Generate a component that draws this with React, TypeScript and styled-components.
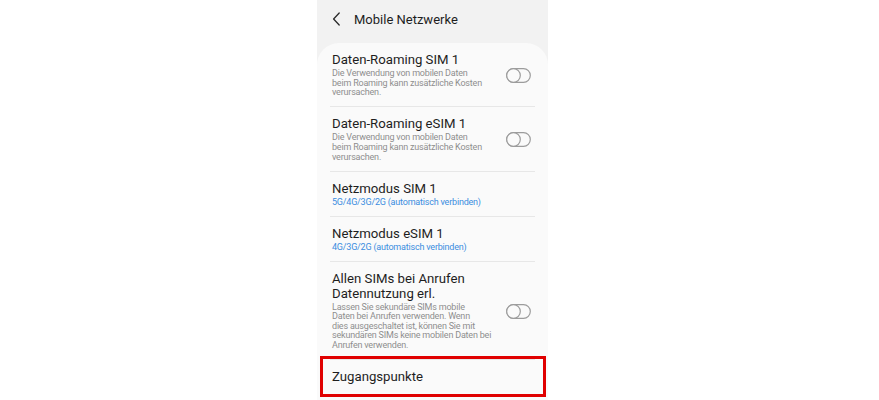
import React from "react";
import styled, { createGlobalStyle } from "styled-components";

const GlobalStyle = createGlobalStyle`
  html, body {
    margin: 0;
    padding: 0;
    background: #ffffff;
  }
  body {
    font-family: Roboto, "Noto Sans", "Liberation Sans", sans-serif;
    -webkit-font-smoothing: antialiased;
  }
`;

const Page = styled.div`
  display: flex;
  width: 879px;
  height: 400px;
  padding-left: 317px;
  box-sizing: border-box;
  overflow: hidden;
`;

const Phone = styled.div`
  width: 231px;
  height: 400px;
  background: #f2f2f2;
  display: flex;
  flex-direction: column;
  overflow: hidden;
`;

const Header = styled.header`
  height: 43px;
  flex: 0 0 43px;
  display: flex;
  align-items: center;
  padding: 0 0 5px 15px;
  box-sizing: border-box;
  gap: 13px;
`;

const BackButton = styled.button`
  border: 0;
  background: transparent;
  padding: 0;
  width: 9px;
  height: 14px;
  display: flex;
  align-items: center;
  justify-content: center;
  color: #2a2a2a;
`;

const HeaderTitle = styled.h1`
  margin: 0;
  font-size: 13px;
  font-weight: 400;
  color: #1e1e1e;
`;

const Card = styled.div`
  flex: 1;
  background: #fafafa;
  border-radius: 22px 22px 0 0;
  padding: 0 13px;
  display: flex;
  flex-direction: column;
`;

const Row = styled.div<{ $last?: boolean; $highlighted?: boolean }>`
  position: relative;
  display: flex;
  align-items: center;
  padding: 10px 4px 8.6px 2px;
  border-bottom: ${(p) => (p.$last ? "none" : "1px solid #e7e7e7")};
  ${(p) =>
    p.$highlighted
      ? `
    &::after {
      content: "";
      position: absolute;
      left: -10px;
      right: -11px;
      top: -4px;
      height: 41px;
      border: 3px solid #e00000;
      box-sizing: border-box;
      pointer-events: none;
    }
  `
      : ""}
`;

const TextBlock = styled.div`
  flex: 1;
  min-width: 0;
  display: flex;
  flex-direction: column;
`;

const Title = styled.div`
  font-size: 13.2px;
  line-height: 14.5px;
  color: #1e1e1e;
`;

const Sub = styled.div<{ $accent?: boolean }>`
  margin-top: 1.5px;
  font-size: 9px;
  line-height: 9.6px;
  letter-spacing: -0.2px;
  color: ${(p) => (p.$accent ? "#3a8de0" : "#8e8e8e")};
  white-space: nowrap;
`;

const ToggleWrap = styled.div`
  flex: 0 0 auto;
  width: 25px;
  height: 15px;
  margin-left: 8px;
  display: flex;
`;

const Toggle = () => (
  <ToggleWrap>
    <svg width="25" height="15" viewBox="0 0 25 15">
      <rect
        x="0.7"
        y="0.7"
        width="23.6"
        height="13.6"
        rx="6.8"
        fill="none"
        stroke="#9c9c9c"
        strokeWidth="1.2"
      />
      <circle cx="7.5" cy="7.5" r="6.8" fill="#fafafa" stroke="#9c9c9c" strokeWidth="1.2" />
    </svg>
  </ToggleWrap>
);

const Lines = ({ lines, accent }: { lines: string[]; accent?: boolean }) => (
  <Sub $accent={accent}>
    {lines.map((l, i) => (
      <React.Fragment key={i}>
        {l}
        {i < lines.length - 1 && <br />}
      </React.Fragment>
    ))}
  </Sub>
);

type Item = {
  title: string[];
  sub?: string[];
  accent?: boolean;
  toggle?: boolean;
  highlighted?: boolean;
};

const items: Item[] = [
  {
    title: ["Daten-Roaming SIM 1"],
    sub: [
      "Die Verwendung von mobilen Daten",
      "beim Roaming kann zusätzliche Kosten",
      "verursachen.",
    ],
    toggle: true,
  },
  {
    title: ["Daten-Roaming eSIM 1"],
    sub: [
      "Die Verwendung von mobilen Daten",
      "beim Roaming kann zusätzliche Kosten",
      "verursachen.",
    ],
    toggle: true,
  },
  {
    title: ["Netzmodus SIM 1"],
    sub: ["5G/4G/3G/2G (automatisch verbinden)"],
    accent: true,
  },
  {
    title: ["Netzmodus eSIM 1"],
    sub: ["4G/3G/2G (automatisch verbinden)"],
    accent: true,
  },
  {
    title: ["Allen SIMs bei Anrufen", "Datennutzung erl."],
    sub: [
      "Lassen Sie sekundäre SIMs mobile",
      "Daten bei Anrufen verwenden. Wenn",
      "dies ausgeschaltet ist, können Sie mit",
      "sekundären SIMs keine mobilen Daten bei",
      "Anrufen verwenden.",
    ],
    toggle: true,
  },
  {
    title: ["Zugangspunkte"],
    highlighted: true,
  },
];

export default function App() {
  return (
    <>
      <GlobalStyle />
      <Page>
        <Phone>
          <Header>
            <BackButton aria-label="Zurück">
              <svg width="9" height="14" viewBox="0 0 9 14">
                <path
                  d="M7.2 1 L1.6 7 L7.2 13"
                  fill="none"
                  stroke="currentColor"
                  strokeWidth="1.3"
                  strokeLinecap="round"
                  strokeLinejoin="round"
                />
              </svg>
            </BackButton>
            <HeaderTitle>Mobile Netzwerke</HeaderTitle>
          </Header>
          <Card>
            {items.map((it, i) => (
              <Row key={i} $last={i === items.length - 1} $highlighted={it.highlighted}>
                <TextBlock>
                  <Title>
                    {it.title.map((t, j) => (
                      <React.Fragment key={j}>
                        {t}
                        {j < it.title.length - 1 && <br />}
                      </React.Fragment>
                    ))}
                  </Title>
                  {it.sub && <Lines lines={it.sub} accent={it.accent} />}
                </TextBlock>
                {it.toggle && <Toggle />}
              </Row>
            ))}
          </Card>
        </Phone>
      </Page>
    </>
  );
}
